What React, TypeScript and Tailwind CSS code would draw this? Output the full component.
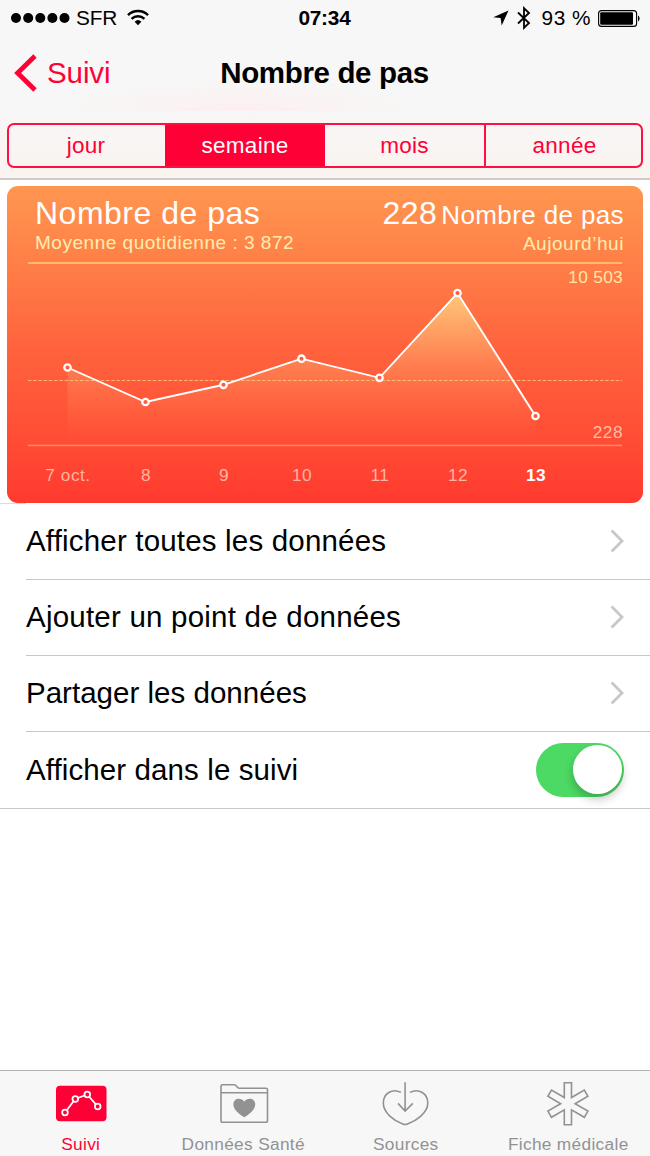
import type { ReactNode } from "react";
import clsx from "clsx";

const periods = [
  { label: "jour", width: "w-[156px]", active: false },
  { label: "semaine", width: "w-[160px]", active: true },
  { label: "mois", width: "w-[159px]", active: false },
  { label: "année", width: "w-[157px]", active: false },
];

const days = ["7 oct.", "8", "9", "10", "11", "12", "13"];

const points = [
  [39.5, 105.5],
  [117.5, 140],
  [195.5, 122.8],
  [273.5, 96.7],
  [351.5, 115.8],
  [429.5, 31],
  [507.5, 154],
];

const rows = [
  { label: "Afficher toutes les données", tracking: "tracking-[0.18px]" },
  { label: "Ajouter un point de données", tracking: "tracking-[0.22px]" },
  { label: "Partager les données", tracking: "tracking-[0.02px]" },
];

function StatusBar() {
  return (
    <div className="grid h-9 grid-cols-[1fr_auto_1fr] items-center text-[20.8px] leading-none">
      <div className="flex items-center pl-[11px]">
        <svg width="60" height="12" viewBox="0 0 60 12">
          {[5, 17.2, 29.3, 41.4, 53.5].map((cx) => (
            <circle key={cx} cx={cx} cy="6" r="5" />
          ))}
        </svg>
        <span className="ml-[5px] tracking-[-0.2px]">SFR</span>
        <svg width="22" height="17" viewBox="0 0 22 17" className="ml-[10px]" fill="none" stroke="#000" strokeWidth="2.5">
          <path d="M1 6.2a14.2 14.2 0 0 1 20 0" />
          <path d="M4.6 9.8a9.1 9.1 0 0 1 12.8 0" />
          <path d="M11 16.2l-3.4-3.5a5 5 0 0 1 6.8 0z" fill="#000" stroke="none" />
        </svg>
      </div>
      <div className="-ml-px font-bold tracking-[-0.2px]">07:34</div>
      <div className="flex items-center justify-end pr-[9px]">
        <svg width="16" height="16" viewBox="0 0 16 16">
          <path d="M15.5 0.5L8.7 15.5L7.6 8L0.3 7.2z" />
        </svg>
        <svg width="14" height="24" viewBox="0 0 14 24" className="ml-[8px]" fill="none" stroke="#000" strokeWidth="1.8">
          <path d="M1 6.5L12 17L7 21.8V2.2L12 7L1 17.5" />
        </svg>
        <span className="ml-[11px] tracking-[0.5px] whitespace-pre">93 %</span>
        <svg width="43" height="17" viewBox="0 0 43 17" className="ml-[7px]">
          <rect x="0.6" y="0.6" width="38" height="15.8" rx="3" fill="none" stroke="#000" strokeWidth="1.1" />
          <rect x="2.2" y="2.2" width="32.8" height="12.6" rx="1.2" />
          <path d="M40 5.5a3.6 3.6 0 0 1 0 6z" />
        </svg>
      </div>
    </div>
  );
}

function NavBar() {
  return (
    <div className="grid h-[75px] grid-cols-[1fr_auto_1fr] items-center bg-[radial-gradient(200px_32px_at_240px_100%,#fdeff0,transparent)] pb-[1px] text-[29.5px] leading-none">
      <div className="flex items-center pl-[14px] text-[#ff0036]">
        <svg width="24" height="38" viewBox="0 0 24 38" fill="none" stroke="currentColor" strokeWidth="4.8">
          <path d="M21 2L3.6 19L21 36" />
        </svg>
        <span className="ml-[9px] tracking-[-0.1px]">Suivi</span>
      </div>
      <div className="-ml-px font-bold tracking-[-0.35px]">Nombre de pas</div>
    </div>
  );
}

function PeriodTabs() {
  return (
    <div className="mx-[7px] mt-3 flex h-[45px] overflow-hidden rounded-[7px] border-2 border-[#ff0f42] text-[22.5px] tracking-[0.3px]">
      {periods.map((p, i) => (
        <div
          key={p.label}
          className={clsx(
            "flex items-center justify-center",
            p.width,
            p.active ? "bg-[#ff0036] text-white" : "text-[#ff0036]",
            i === 0 && "pr-[2px]",
            i === 3 && "border-l-2 border-[#ff0f42] pl-[2px]",
          )}
        >
          {p.label}
        </div>
      ))}
    </div>
  );
}

function StepsChart() {
  const line = points.map(([x, y]) => `${x} ${y}`).join("L");

  return (
    <div className="relative mx-[21px] h-[185px] text-[17.3px] leading-5">
      <svg width="594" height="185" viewBox="0 0 594 185" className="block">
        <defs>
          <linearGradient id="area" gradientUnits="userSpaceOnUse" x1="0" y1="31" x2="0" y2="183">
            <stop offset="0" stopColor="#ffcd7d" stopOpacity="0.95" />
            <stop offset="0.45" stopColor="#ffb070" stopOpacity="0.42" />
            <stop offset="1" stopColor="#ff7a50" stopOpacity="0" />
          </linearGradient>
        </defs>
        <rect y="0.2" width="594" height="1.7" fill="#ffc56b" />
        <path d={`M39.5 183L${line}V183z`} fill="url(#area)" />
        <path d="M0 118.5H594" stroke="#ffcb83" strokeOpacity="0.8" strokeWidth="1.2" strokeDasharray="3.5 1.7" />
        <rect y="182.6" width="594" height="1.6" fill="#ff8762" />
        <path d={`M${line}`} fill="none" stroke="#fff" strokeWidth="1.9" />
        {points.map(([x, y]) => (
          <circle key={x} cx={x} cy={y} r="3.2" fill="#ff5c3c" stroke="#fff" strokeWidth="2.3" />
        ))}
      </svg>
      <span className="absolute top-[5px] -right-px tracking-[0.3px] text-[#ffe6a8]">10 503</span>
      <span className="absolute top-[160px] -right-px tracking-[0.5px] text-[#ffbda1]">228</span>
    </div>
  );
}

function StepsCard() {
  return (
    <div className="mx-[7px] h-[317px] overflow-hidden rounded-[11px] bg-linear-to-b from-[#ff9650] via-[#ff643e] to-[#ff392f]">
      <div className="flex h-[76px] justify-between pt-[11px] pr-[19px] pl-[26px]">
        <div className="pl-[2px]">
          <div className="text-[32px] leading-8 tracking-[0.5px] text-white">Nombre de pas</div>
          <div className="mt-[4px] text-[19px] leading-5 tracking-[0.52px] text-[#ffedae]">
            Moyenne quotidienne : 3 872
          </div>
        </div>
        <div className="text-right">
          <div className="flex items-baseline text-white">
            <span className="text-[32px] leading-8 tracking-[0.5px]">228</span>
            <span className="ml-[4px] text-[26px] leading-8 tracking-[0.38px]">Nombre de pas</span>
          </div>
          <div className="mt-[3px] text-[19px] leading-5 tracking-[0.55px] text-[#ffedae]">Aujourd’hui</div>
        </div>
      </div>
      <StepsChart />
      <div className="mt-[18px] flex pl-[22px] text-center text-[17.3px] leading-5 tracking-[0.5px]">
        {days.map((day) => (
          <span key={day} className={clsx("w-[78px]", day === "13" ? "font-bold text-white" : "text-[#ffb5a0]")}>
            {day}
          </span>
        ))}
      </div>
    </div>
  );
}

function Switch() {
  return (
    <div className="mr-[26px] flex h-[54px] w-[88px] items-center justify-end rounded-full bg-[#4cd964] pr-[2.5px]">
      <div className="size-[49px] rounded-full bg-white shadow-[0_5px_10px_rgba(0,0,0,0.24)]" />
    </div>
  );
}

function Tab({ label, active, children }: { label: string; active?: boolean; children: ReactNode }) {
  return (
    <div className={clsx("flex flex-col items-center pt-[9px]", active ? "text-[#ff0036]" : "text-[#929292]")}>
      <svg width="60" height="48" viewBox="0 0 60 48" fill="none" stroke="currentColor" strokeWidth="1.6">
        {children}
      </svg>
      <span className="mt-[6px] mr-px text-[17.3px] leading-5 tracking-[0.32px]">{label}</span>
    </div>
  );
}

export default function App() {
  return (
    <div className="flex h-[1156px] w-[650px] flex-col bg-white font-['Liberation_Sans',Arial,sans-serif] text-black">
      <header className="h-[180px] border-b-2 border-[#d0cbca] bg-linear-to-b from-[#f7f7f7] from-60% to-[#faf3f0]">
        <StatusBar />
        <NavBar />
        <PeriodTabs />
      </header>

      <main className="flex-1 pt-[6px]">
        <StepsCard />
        <div className="border-b border-[#c8c7cc]">
          <div className="h-px w-[26px] bg-[#dcdbdf]" />
          {rows.map((row) => (
            <div key={row.label} className="ml-[26px] flex h-[76px] items-center justify-between border-b border-[#c8c7cc] pr-[26px] pb-px">
              <span className={clsx("text-[29.5px] leading-none", row.tracking)}>{row.label}</span>
              <svg width="14" height="24" viewBox="0 0 14 24" fill="none" stroke="#c7c7cc" strokeWidth="2.8">
                <path d="M1.6 1.4L12 12L1.6 22.6" />
              </svg>
            </div>
          ))}
          <div className="ml-[26px] flex h-[76px] items-center justify-between pb-px">
            <span className="text-[29.5px] leading-none tracking-[0.1px]">Afficher dans le suivi</span>
            <Switch />
          </div>
        </div>
      </main>

      <nav className="grid h-[86px] grid-cols-4 border-t border-[#b2b2b2] bg-[#f7f7f7]">
        <Tab label="Suivi" active>
          <rect x="5" y="5.8" width="50.5" height="35.5" rx="4" fill="currentColor" stroke="none" />
          <g fill="#ff0036" stroke="#fff" strokeWidth="1.8">
            <path d="M14 32.5L24.3 19L36.3 14.5L46.7 26.5" fill="none" />
            <circle cx="14" cy="32.5" r="2.8" />
            <circle cx="24.3" cy="19" r="2.8" />
            <circle cx="36.3" cy="14.5" r="2.8" />
            <circle cx="46.7" cy="26.5" r="2.8" />
          </g>
        </Tab>
        <Tab label="Données Santé">
          <path d="M7 40.8V6.2a1.5 1.5 0 0 1 1.5-1.5H20.5c2 0 2.5 3.6 4.5 3.6H52a1.5 1.5 0 0 1 1.5 1.5V40.8a1.5 1.5 0 0 1-1.5 1.5H8.5a1.5 1.5 0 0 1-1.5-1.5zM7 12.7H53.5" />
          <path
            d="M30.3 37.2C26 34.6 19.4 30 19.4 24.4c0-6.2 7.6-7.4 10.9-2.7 3.3-4.7 10.9-3.5 10.9 2.7 0 5.6-6.6 10.2-10.9 12.8z"
            fill="currentColor"
            stroke="none"
          />
        </Tab>
        <Tab label="Sources">
          <path d="M25 12.4C16 8 7.3 13.5 7.3 23c0 10 11 18 19.4 21.1q2.4 0.9 4.8 0C40 41 51.8 33 51.8 23 51.8 13.5 43 8 33.8 12.4" />
          <path d="M29.1 2.3V31M22 23.4L29.1 31L36.8 23.4" />
        </Tab>
        <Tab label="Fiche médicale">
          <path
            transform="translate(28.9 23.7)"
            d="M-3.6-21H3.6V-6.2L16.4-13.6L20-7.4L7.2 0L20 7.4L16.4 13.6L3.6 6.2V21H-3.6V6.2L-16.4 13.6L-20 7.4L-7.2 0L-20-7.4L-16.4-13.6L-3.6-6.2z"
          />
        </Tab>
      </nav>
    </div>
  );
}
